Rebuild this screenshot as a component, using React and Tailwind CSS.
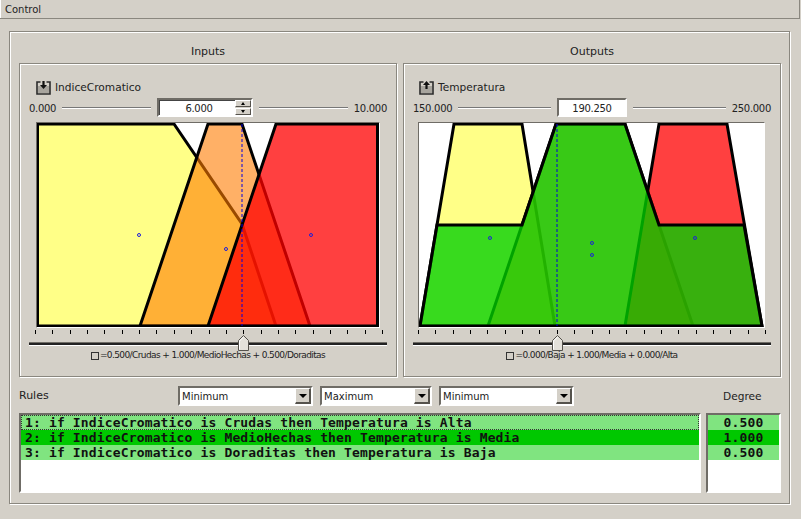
import React from 'react';

const LINE = { stroke: '#000', strokeWidth: 3, strokeLinejoin: 'miter' };

function Chart({ viewBox, width, shapes, cursor, dots }) {
  return (
    <svg viewBox={viewBox} width={width} height={206} className="block border border-[#6f6c66] border-r-white border-b-white bg-white">
      {shapes.map((s, i) => (
        <polygon key={i} points={s.points} fill={s.fill} fillOpacity={s.alpha} {...LINE} />
      ))}
      <line x1={cursor} y1="124" x2={cursor} y2="326" stroke="#0000e0" strokeWidth="1" strokeDasharray="3 2" />
      {dots.map((d, i) => (
        <circle key={i} cx={d[0]} cy={d[1]} r="1.5" fill="none" stroke="#2020d8" strokeWidth="1" />
      ))}
    </svg>
  );
}

function Ticks({ start, end }) {
  const marks = [];
  for (let i = 0; i <= 20; i++) marks.push(start + ((end - start) * i) / 20);
  return (
    <svg width={end - start + 1} height="4" className="block">
      {marks.map((m, i) => (
        <line key={i} x1={Math.round(m - start) + 0.5} y1="0" x2={Math.round(m - start) + 0.5} y2="4" stroke="#000" />
      ))}
    </svg>
  );
}

function Slider({ left }) {
  return (
    <div className="relative h-4 mx-[9px]">
      <div className="absolute left-0 right-0 top-[7px] h-[3px] border-t border-[#6f6c66] bg-[#222] shadow-[0_1px_0_#fff]" />
      <svg width="11" height="16" className="absolute top-0" style={{ left }}>
        <path d="M0.5 15.5V5.5L5.5 0.5L10.5 5.5V15.5Z" fill="#e4e1da" stroke="#55524c" />
        <path d="M1.5 14.5V6L5.5 2" fill="none" stroke="#fff" />
      </svg>
    </div>
  );
}

function TrayIcon({ up }) {
  return (
    <svg width="15" height="15" viewBox="0 0 15 15" className="block">
      <path d="M2 6H13V13H2Z" fill="#a8a59e" />
      <path d="M4.5 2H1V14H14V2H10.5" fill="none" stroke="#2b2b2b" strokeWidth="1.6" />
      {up ? (
        <path d="M7.5 1L11 5H8.6V9H6.4V5H4Z" fill="#111" />
      ) : (
        <path d="M6.4 1H8.6V5H11L7.5 9L4 5H6.4Z" fill="#111" />
      )}
    </svg>
  );
}

function Spinner({ value }) {
  return (
    <div className="flex w-[96px] h-[19px] border-2 border-[#6f6c66] border-r-white border-b-white bg-white shadow-[inset_1px_1px_0_#444]">
      <div className="flex-1 text-center text-[10px] tracking-[-0.3px] leading-[18px] text-[#222] pl-[4px]">{value}</div>
      <div className="w-[16px] flex flex-col bg-[#d4d0c8]">
        <div className="h-[8px] border border-[#55524c] border-t-white border-l-white flex items-center justify-center">
          <div className="w-0 h-0 border-x-[2px] border-x-transparent border-b-[3px] border-b-black" />
        </div>
        <div className="h-[8px] mt-px border border-[#55524c] border-t-white border-l-white flex items-center justify-center">
          <div className="w-0 h-0 border-x-[2px] border-x-transparent border-t-[3px] border-t-black" />
        </div>
      </div>
    </div>
  );
}

function Range({ min, max, children }) {
  return (
    <div className="flex items-center gap-[6px] px-[9px] h-[19px] text-[10px] tracking-[-0.3px] text-[#222]">
      <span className="pt-px">{min}</span>
      <div className="flex-1 h-[2px] border-t border-[#777] border-b border-b-white" />
      {children}
      <div className="flex-1 h-[2px] border-t border-[#777] border-b border-b-white" />
      <span className="pt-px">{max}</span>
    </div>
  );
}

function Variable({ up, name, range, center, chart, ticks, thumb, caption, chartPad, iconPad }) {
  return (
    <div className="flex-1 flex flex-col min-w-0">
      <div className="h-[31px] pt-[9px] flex items-center justify-center text-[11px] text-[#222]">{up ? 'Outputs' : 'Inputs'}</div>
      <div className="h-[314px] border border-[#8a877f] shadow-[inset_1px_1px_0_#fff,1px_1px_0_#fff] pt-[16px]">
        <div className={`flex items-center gap-[4px] h-[14px] text-[10.6px] text-[#222] ${iconPad}`}>
          <TrayIcon up={up} />
          <span className="pt-px">{name}</span>
        </div>
        <div className="mt-[4px]">
          <Range min={range[0]} max={range[1]}>{center}</Range>
        </div>
        <div className={`mt-[5px] ${chartPad}`}>{chart}</div>
        <div className={`mt-[2px] ${ticks.pad}`}><Ticks start={ticks.start} end={ticks.end} /></div>
        <div className="mt-px"><Slider left={thumb} /></div>
        <div className="flex items-center justify-center h-[14px] -mt-[2px] text-[9px] tracking-[-0.6px] text-[#222]">
          <span className="inline-block w-[8px] h-[8px] border border-[#333] mr-px" />
          {caption}
        </div>
      </div>
    </div>
  );
}

function Combo({ label, width }) {
  return (
    <div className={`flex items-center justify-between h-[20px] border-2 border-[#6f6c66] border-r-white border-b-white bg-white pl-[2px] text-[10px] text-[#222] ${width}`}>
      <span>{label}</span>
      <div className="w-[16px] h-[16px] bg-[#d4d0c8] border border-r-2 border-b-2 border-[#55524c] border-t-white border-l-white flex flex-col items-center justify-center">
        <div className="w-0 h-0 border-x-[4px] border-x-transparent border-t-[4px] border-t-black" />
      </div>
    </div>
  );
}

const RULES = [
  { text: '1: if IndiceCromatico is Crudas then Temperatura is Alta', degree: '0.500', on: false },
  { text: '2: if IndiceCromatico is MedioHechas then Temperatura is Media', degree: '1.000', on: true },
  { text: '3: if IndiceCromatico is Doraditas then Temperatura is Baja', degree: '0.500', on: false },
];

const rowColor = (on) => (on ? 'bg-[#00c800]' : 'bg-[#80e480]');

export default function App() {
  const inputShapes = [
    { points: '37.5,124 174,124 242,224 276,326 37.5,326', fill: '#ffff00', alpha: 0.47 },
    { points: '140,326 208,124 242,124 310,326', fill: '#ff7c00', alpha: 0.6 },
    { points: '208,326 276,124 377.5,124 377.5,326', fill: '#ff0000', alpha: 0.75 },
  ];
  const outputShapes = [
    { points: '420,326 454,124 522,124 555,326', fill: '#ffff00', alpha: 0.47 },
    { points: '488,326 556,124 625,124 693,326', fill: '#ff7c00', alpha: 0.6 },
    { points: '625,326 659,124 727,124 762,326', fill: '#ff0000', alpha: 0.75 },
    { points: '420,326 437,225 522,225 556,124 625,124 659,225 744,225 762,326', fill: '#00d000', alpha: 0.78 },
  ];

  return (
    <div className="w-[801px] h-[519px] bg-[#d4d0c8] font-['DejaVu_Sans',sans-serif] overflow-hidden">
      <div className="h-[19px] border-b border-r border-[#8a877f] mr-[1px] flex">
        <div className="pl-[4px] pr-[5px] border-l border-white text-[10px] leading-[18px] pt-px text-[#222]">Control</div>
      </div>
      <div className="ml-[9px] mr-[11px] mt-[12px] h-[473px] border border-[#8a877f] shadow-[inset_1px_1px_0_#fff,1px_1px_0_#fff] pl-[9px] pr-[8px]">
        <div className="flex gap-[6px]">
          <Variable
            name="IndiceCromatico"
            iconPad="pl-[16px]"
            chartPad="pl-[16px]"
            range={['0.000', '10.000']}
            center={<Spinner value="6.000" />}
            chart={<Chart viewBox="37 123 342 204" width={344} shapes={inputShapes} cursor={242} dots={[[139, 235], [226, 249], [311, 235]]} />}
            ticks={{ start: 35, end: 382, pad: 'pl-[15px]' }}
            thumb={209}
            caption="=0.500/Crudas + 1.000/MedioHechas + 0.500/Doraditas"
          />
          <Variable
            up
            name="Temperatura"
            iconPad="pl-[15px]"
            chartPad="pl-[14px]"
            range={['150.000', '250.000']}
            center={<div className="w-[70px] h-[19px] border-2 border-[#6f6c66] border-r-white border-b-white bg-white text-center text-[10px] leading-[17px] text-[#222]">190.250</div>}
            chart={<Chart viewBox="419 123 345 204" width={347} shapes={outputShapes} cursor={557} dots={[[490, 238], [592, 243], [592, 255], [695, 238]]} />}
            ticks={{ start: 418, end: 765, pad: 'pl-[14px]' }}
            thumb={139}
            caption="=0.000/Baja + 1.000/Media + 0.000/Alta"
          />
        </div>

        <div className="flex items-center h-[20px] mt-[9px] text-[11px] text-[#222]">
          <span className="w-[159px] pt-px">Rules</span>
          <div className="flex gap-[7px]">
            <Combo label="Minimum" width="w-[135px]" />
            <Combo label="Maximum" width="w-[112px]" />
            <Combo label="Minimum" width="w-[135px]" />
          </div>
          <span className="ml-[149px] pt-px text-[10.6px]">Degree</span>
        </div>

        <div className="flex gap-[5px] mt-[7px] font-['DejaVu_Sans_Mono',monospace] font-bold text-[13px] tracking-[0.15px] text-[#111]">
          <div className="w-[682px] h-[80px] border-2 border-[#6f6c66] border-r-white border-b-white bg-white">
            {RULES.map((r, i) => (
              <div key={i} className={`h-[15px] leading-[15px] pl-[4px] whitespace-nowrap ${rowColor(r.on)} ${i === 0 ? 'outline-1 outline-dotted -outline-offset-1 outline-[#333]' : ''}`}>{r.text}</div>
            ))}
          </div>
          <div className="w-[75px] h-[80px] border-2 border-[#6f6c66] border-r-white border-b-white bg-white">
            {RULES.map((r, i) => (
              <div key={i} className={`h-[15px] leading-[15px] text-center ${rowColor(r.on)}`}>{r.degree}</div>
            ))}
          </div>
        </div>
      </div>
    </div>
  );
}
